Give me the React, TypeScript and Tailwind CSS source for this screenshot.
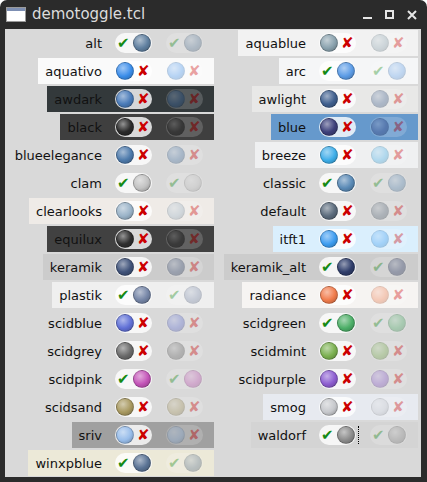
type Row = { name: string; bg: string; on: boolean; ball: string; focus?: boolean };

const leftRows: Row[] = [
  { name: "alt", bg: "bg-[#d9d9d9]", on: true, ball: "#5f7f9f" },
  { name: "aquativo", bg: "bg-[#fafafa]", on: false, ball: "#3b8eea" },
  { name: "awdark", bg: "bg-[#33393b]", on: false, ball: "#4a7bb8" },
  { name: "black", bg: "bg-[#3f3f3f]", on: false, ball: "#2a2a2a" },
  { name: "blueelegance", bg: "bg-[#d9d9d9]", on: false, ball: "#4d7aab" },
  { name: "clam", bg: "bg-[#d9d9d9]", on: true, ball: "#c2c2c2" },
  { name: "clearlooks", bg: "bg-[#efebe7]", on: false, ball: "#9ab3c8" },
  { name: "equilux", bg: "bg-[#414141]", on: false, ball: "#2e2e2e" },
  { name: "keramik", bg: "bg-[#cccccc]", on: false, ball: "#3f5279" },
  { name: "plastik", bg: "bg-[#efefef]", on: true, ball: "#7585a6" },
  { name: "scidblue", bg: "bg-[#d9d9d9]", on: false, ball: "#6170d6" },
  { name: "scidgrey", bg: "bg-[#d9d9d9]", on: false, ball: "#6a6a6a" },
  { name: "scidpink", bg: "bg-[#d9d9d9]", on: true, ball: "#c354b8" },
  { name: "scidsand", bg: "bg-[#d9d9d9]", on: false, ball: "#a89960" },
  { name: "sriv", bg: "bg-[#a0a0a0]", on: false, ball: "#98bdea" },
  { name: "winxpblue", bg: "bg-[#ece9d8]", on: true, ball: "#5a7394" },
];

const rightRows: Row[] = [
  { name: "aquablue", bg: "bg-[#f2f2f2]", on: false, ball: "#8aa2ae" },
  { name: "arc", bg: "bg-[#f5f6f7]", on: true, ball: "#5c9ce6" },
  { name: "awlight", bg: "bg-[#e8e8e7]", on: false, ball: "#3f5f8e" },
  { name: "blue", bg: "bg-[#6699cc]", on: false, ball: "#3d3f7a" },
  { name: "breeze", bg: "bg-[#eff0f1]", on: false, ball: "#3daee9" },
  { name: "classic", bg: "bg-[#d9d9d9]", on: true, ball: "#5a8ab6" },
  { name: "default", bg: "bg-[#d9d9d9]", on: false, ball: "#5b6b7c" },
  { name: "itft1", bg: "bg-[#daeffd]", on: false, ball: "#3d9df0" },
  { name: "keramik_alt", bg: "bg-[#cccccc]", on: true, ball: "#2f3d6a" },
  { name: "radiance", bg: "bg-[#f6f4f2]", on: false, ball: "#f07c4c" },
  { name: "scidgreen", bg: "bg-[#d9d9d9]", on: true, ball: "#4caf68" },
  { name: "scidmint", bg: "bg-[#d9d9d9]", on: false, ball: "#7bb04f" },
  { name: "scidpurple", bg: "bg-[#d9d9d9]", on: false, ball: "#8d5dd0" },
  { name: "smog", bg: "bg-[#e7eaf0]", on: false, ball: "#c6c8cc" },
  { name: "waldorf", bg: "bg-[#d4d4d4]", on: true, ball: "#8c8c8c", focus: true },
];

function Ball({ color }: { color: string }) {
  return (
    <span
      className="block w-[18px] h-[18px] rounded-full border border-black/20"
      style={{
        background: `radial-gradient(circle at 38% 32%, color-mix(in srgb, ${color} 50%, white) 0%, ${color} 55%, color-mix(in srgb, ${color} 70%, black) 100%)`,
      }}
    />
  );
}

function Toggle({ row, disabled }: { row: Row; disabled?: boolean }) {
  return (
    <div
      className={`relative w-[37px] h-[20px] rounded-full flex items-center shrink-0 ${
        disabled ? "opacity-[0.35] bg-white/50" : "bg-white/80"
      }`}
    >
      {row.on ? (
        <>
          <span className="ml-[2px] text-[15px] leading-none text-[#148a14] font-['DejaVu_Sans',sans-serif]">✔</span>
          <span className="ml-auto mr-[1px]">
            <Ball color={row.ball} />
          </span>
        </>
      ) : (
        <>
          <span className="ml-[1px]">
            <Ball color={row.ball} />
          </span>
          <span className="ml-[3px] text-[15px] leading-none text-[#cc0000] font-['DejaVu_Sans',sans-serif]">✘</span>
        </>
      )}
      {row.focus && !disabled && (
        <span className="absolute right-[-3px] top-[1px] h-[18px] border-r border-dotted border-black" />
      )}
    </div>
  );
}

function Column({ rows, width }: { rows: Row[]; width: string }) {
  return (
    <div className={`${width} flex flex-col items-end gap-[2px]`}>
      {rows.map((r) => (
        <div key={r.name} className={`h-[26px] flex items-center pl-[7px] pr-[11px] ${r.bg}`}>
          <span className="text-[13px] leading-none text-[#111]">{r.name}</span>
          <div className="ml-[13px]">
            <Toggle row={r} />
          </div>
          <div className="ml-[14px]">
            <Toggle row={r} disabled />
          </div>
        </div>
      ))}
    </div>
  );
}

export default function App() {
  return (
    <div className="w-[427px] h-[482px] bg-[#2b2b2b] rounded-t-[7px] flex flex-col overflow-hidden font-['DejaVu_Sans',sans-serif]">
      <div className="h-[29px] flex items-center pl-[6px] pr-[10px] shrink-0">
        <div className="w-[20px] h-[15px] border border-[#9a9a9a] bg-white flex flex-col">
          <div className="h-[3px] bg-[#7d8fb3]" />
        </div>
        <span className="ml-[6px] text-[15px] leading-none text-[#dcdcdc]">demotoggle.tcl</span>
        <div className="ml-auto flex items-center gap-[13px] text-[#e6e6e6]">
          <svg width="9" height="9" viewBox="0 0 9 9">
            <rect x="0" y="7" width="9" height="2" fill="currentColor" />
          </svg>
          <svg width="9" height="9" viewBox="0 0 9 9">
            <rect x="1" y="1" width="7" height="7" fill="none" stroke="currentColor" strokeWidth="2" />
          </svg>
          <svg width="10" height="10" viewBox="0 0 10 10">
            <path d="M1 1 L9 9 M9 1 L1 9" stroke="currentColor" strokeWidth="2" />
          </svg>
        </div>
      </div>
      <div className="ml-[5px] mr-[6px] h-[448px] bg-[#d9d9d9] flex pt-[1px]">
        <Column rows={leftRows} width="w-[209px]" />
        <div className="ml-[4px]">
          <Column rows={rightRows} width="w-[200px]" />
        </div>
      </div>
    </div>
  );
}
